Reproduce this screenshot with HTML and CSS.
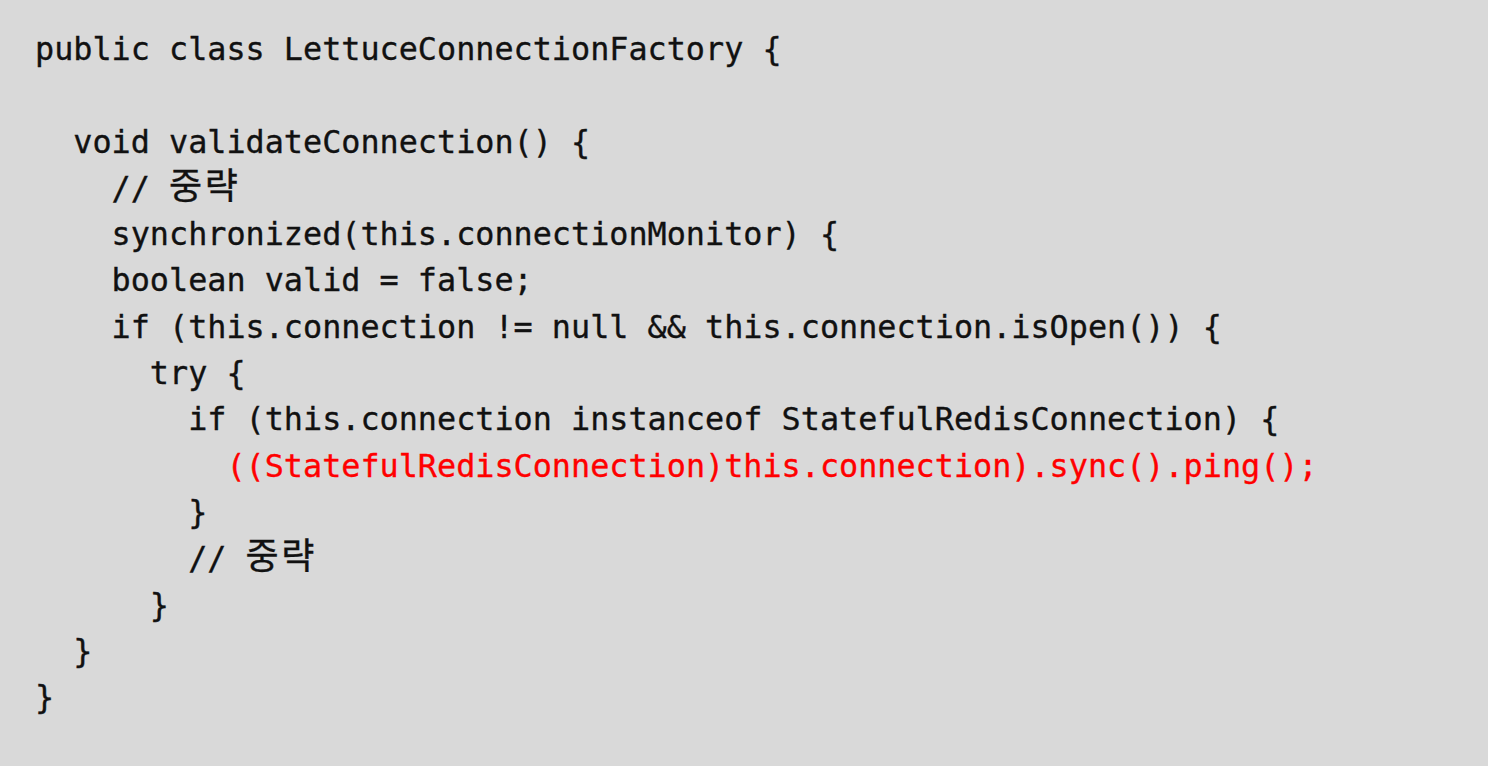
FILE: index.html
```html
<!DOCTYPE html>
<html lang="ko">
<head>
<meta charset="utf-8">
<title>LettuceConnectionFactory</title>
<link rel="stylesheet" href="styles.css">
</head>
<body>
<pre class="code">public class LettuceConnectionFactory {

  void validateConnection() {
    // <span class="ko">중략</span>
    synchronized(this.connectionMonitor) {
    boolean valid = false;
    if (this.connection != null &amp;&amp; this.connection.isOpen()) {
      try {
        if (this.connection instanceof StatefulRedisConnection) {
          <span class="hl">((StatefulRedisConnection)this.connection).sync().ping();</span>
        }
        // <span class="ko">중략</span>
      }
  }
}</pre>
</body>
</html>
```
FILE: styles.css
```css
html, body {
  margin: 0;
  padding: 0;
  background: #d9d9d9;
}
body {
  width: 1488px;
  height: 766px;
  overflow: hidden;
}
.code {
  margin: 0;
  padding: 26px 0 0 35px;
  font-family: "DejaVu Sans Mono", "Liberation Mono", "Noto Sans CJK KR", monospace;
  font-size: 31.8px;
  line-height: 46.3px;
  color: #111;
  white-space: pre;
  -webkit-text-stroke: 0.35px currentColor;
}
.ko {
  font-family: "Noto Sans CJK KR", sans-serif;
  font-size: 36px;
  line-height: 0;
  letter-spacing: 2.5px;
}
.hl {
  color: #ff0000;
}
```
